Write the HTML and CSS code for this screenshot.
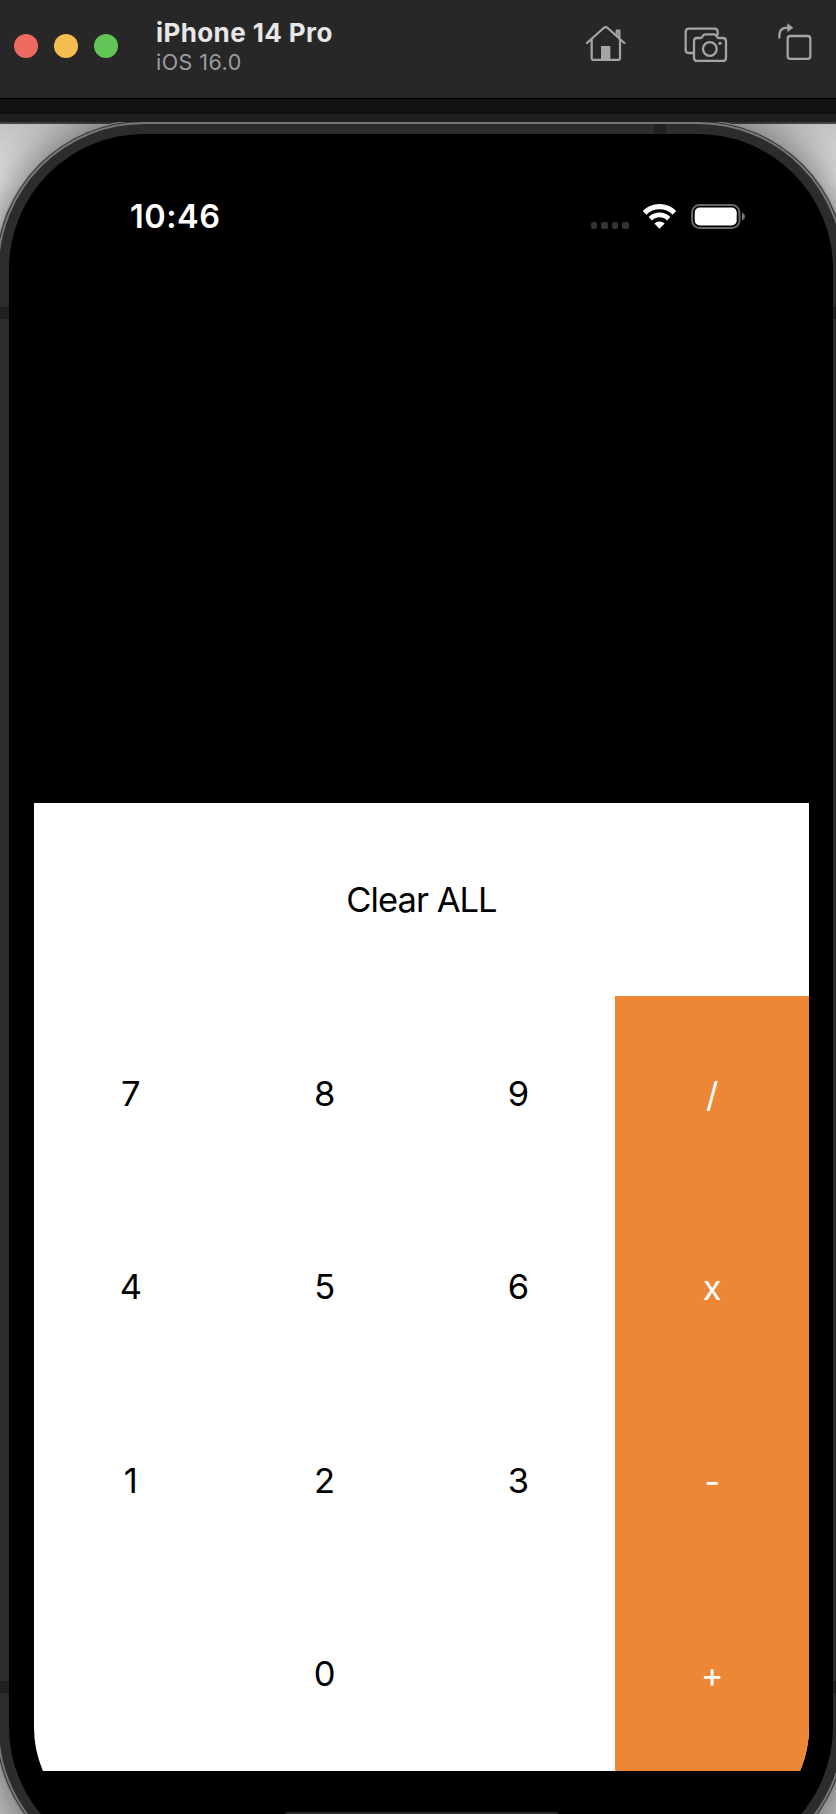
FILE: index.html
```html
<!DOCTYPE html>
<html lang="en">
<head>
<meta charset="utf-8">
<title>iPhone 14 Pro</title>
<link rel="stylesheet" href="styles.css">
</head>
<body>
<header class="toolbar">
  <div class="lights"><i class="light red"></i><i class="light yellow"></i><i class="light green"></i></div>
  <div class="titles"><div class="title">iPhone 14 Pro</div><div class="subtitle">iOS 16.0</div></div>
  <div class="actions">
    <svg class="home" viewBox="78 60 120 140"><path d="M81 129L131 84Q137 79 143 84L193 129M95 119V173Q95 180 102 180H173Q180 180 180 173V119M170 108V92H178V116"/><path class="solid" d="M123 138H151V181H123z"/></svg>
    <svg class="camera" viewBox="371 60 132 140"><path d="M398 159H385Q376 159 376 150V96Q376 86 386 86H462Q472 86 472 96V104M410 114H420Q425 114 427 109Q429 103 436 103H460Q467 103 469 109Q471 114 476 114H487Q497 114 497 124V173Q497 183 487 183H411Q401 183 401 173V124Q401 114 410 114z"/><circle cx="448.500" cy="147" r="20.500"/><circle class="solid" cx="479" cy="130" r="5"/></svg>
    <svg class="rotate" viewBox="653 60 102 140"><rect x="682" y="108" width="68" height="69" rx="8"/><path d="M657 113V106Q657 83 681 83"/><path class="solid" d="M681 70L699 83L681 96z"/></svg>
  </div>
</header>
<div class="strip"></div>
<main class="desktop">
  <div class="phone">
    <i class="band band-top"></i><i class="band band-left"></i><i class="band band-right"></i><i class="band band-low-left"></i><i class="band band-low-right"></i>
    <div class="screen">
      <div class="status">
        <span class="time">10:46</span>
        <div class="indicators">
          <div class="dots"><i></i><i></i><i></i><i></i></div>
          <svg class="wifi" viewBox="0 0 33 25"><path d="M1.600 8.800A21 21 0 0 1 31.400 8.800" stroke-width="5.200"/><path d="M7.300 14.700A13 13 0 0 1 25.700 14.700" stroke-width="4.800"/><path class="fan" d="M16.500 24.700L11.300 19.500A7.500 7.500 0 0 1 21.700 19.500z"/></svg>
          <svg class="battery" viewBox="0 0 54 25"><rect x="1" y="1" width="47.500" height="23" rx="7.500"/><rect class="charge" x="3.700" y="3.500" width="42" height="18" rx="5"/><path d="M51 8.500Q54 10 54 12.500T51 16.500z"/></svg>
        </div>
      </div>
      <div class="keypad">
        <div class="key clear">Clear ALL</div>
        <div class="key">7</div><div class="key">8</div><div class="key">9</div><div class="key op">/</div>
        <div class="key">4</div><div class="key">5</div><div class="key">6</div><div class="key op">x</div>
        <div class="key">1</div><div class="key">2</div><div class="key">3</div><div class="key op">-</div>
        <div class="key zero">0</div><div class="key op">+</div>
      </div>
      <div class="home-bar"></div>
    </div>
  </div>
</main>
</body>
</html>
```
FILE: styles.css
```css
* { box-sizing: border-box; }
body {
  margin: 0;
  height: 1814px;
  overflow: hidden;
  display: flex;
  flex-direction: column;
  background: #000;
  font-family: Inter, "Liberation Sans", sans-serif;
}
.toolbar {
  flex: none;
  height: 99px;
  display: flex;
  align-items: flex-start;
  padding: 0 24px 0 14px;
  background: #272728;
  border-bottom: 1px solid #000;
}
.lights { display: flex; gap: 16px; padding-top: 34px; }
.light { width: 24px; height: 24px; border-radius: 50%; }
.red { background: #ed6a5f; }
.yellow { background: #f6be50; }
.green { background: #61c555; }
.titles { margin-left: 38px; padding-top: 17px; white-space: nowrap; }
.title { font-size: 26px; line-height: 31px; font-weight: 700; letter-spacing: .4px; color: #e7e7e7; }
.subtitle { font-size: 21.5px; line-height: 28px; letter-spacing: .45px; color: #9c9c9d; }
.actions { display: flex; margin-left: auto; padding-top: 20px; }
.actions svg { height: 46.67px; fill: none; stroke: #a5a5a6; stroke-width: 6.8; stroke-linejoin: round; stroke-linecap: round; }
.actions .solid { fill: #a5a5a6; stroke: none; }
.home { width: 40px; }
.camera { width: 44px; margin-left: 57.7px; }
.rotate { width: 34px; margin-left: 50px; }
.strip { flex: none; height: 23px; background: linear-gradient(#111214 15px, #1e1f20 15px); }
.desktop {
  flex: 1;
  overflow: hidden;
  background: linear-gradient(#434344 2px, transparent 2px), linear-gradient(#c4c4c4, #e8e8e8 60px, #e8e8e8 1500px, #c8c8c8);
}
.phone {
  position: relative;
  width: 848px;
  height: 1752px;
  margin-left: -3px;
  padding: 37px;
  border-radius: 147px;
  border: 2px solid #777;
  background: #2c2c2c;
  box-shadow: 0 0 0 1px #333, 0 0 0 2px #8a8a8a, 0 0 45px 4px rgba(0, 0, 0, .55);
}
/* The black bezel sits inside the metal rim. */
.phone::before {
  content: "";
  position: absolute;
  inset: 10px;
  border-radius: 135px;
  background: #000;
}
.band { position: absolute; background: #202020; }
.band-top { left: 655px; top: 0; width: 12px; height: 10px; }
.band-left, .band-low-left { left: 0; width: 10px; height: 12px; }
.band-right, .band-low-right { right: 0; width: 10px; height: 12px; }
.band-left, .band-right { top: 183px; }
.band-low-left, .band-low-right { top: 1557px; }
.screen {
  position: relative;
  width: 775px;
  height: 1676px;
  margin: -2px 0 0 -2px;
  border-radius: 107px;
  overflow: hidden;
  background: #000;
}
.status { height: 643.6px; display: flex; justify-content: space-between; padding: 38px 64px 0 96px; }
.time { font-size: 32.5px; line-height: 40px; font-weight: 600; letter-spacing: .5px; color: #fff; }
.indicators { display: flex; align-items: flex-start; padding-top: 7px; }
.dots { display: flex; gap: 4px; margin: 18px 14.500px 0 0; }
.dots i { width: 6.500px; height: 6.500px; border-radius: 2px; background: #333; }
.wifi { width: 33px; height: 25px; fill: none; stroke: #fff; margin-right: 15px; }
.wifi .fan { fill: #fff; stroke: none; }
.battery { width: 54px; height: 25px; fill: #777; }
.battery rect:first-child { fill: none; stroke: #666; stroke-width: 2; }
.battery .charge { fill: #fff; }
.keypad {
  display: grid;
  grid-template-columns: repeat(4, 1fr);
  grid-auto-rows: 193.65px;
  background: #fff;
}
.key { display: flex; align-items: center; justify-content: center; font-size: 34.5px; color: #000; }
.clear { grid-column: span 4; letter-spacing: -.95px; }
.zero { grid-column: span 3; }
.op { padding-top: 2px; background: #ee8735; color: #fff; }
.home-bar { width: 276px; height: 10px; margin: 41px auto 0; border-radius: 5px; background: #2a2a2a; }
```
